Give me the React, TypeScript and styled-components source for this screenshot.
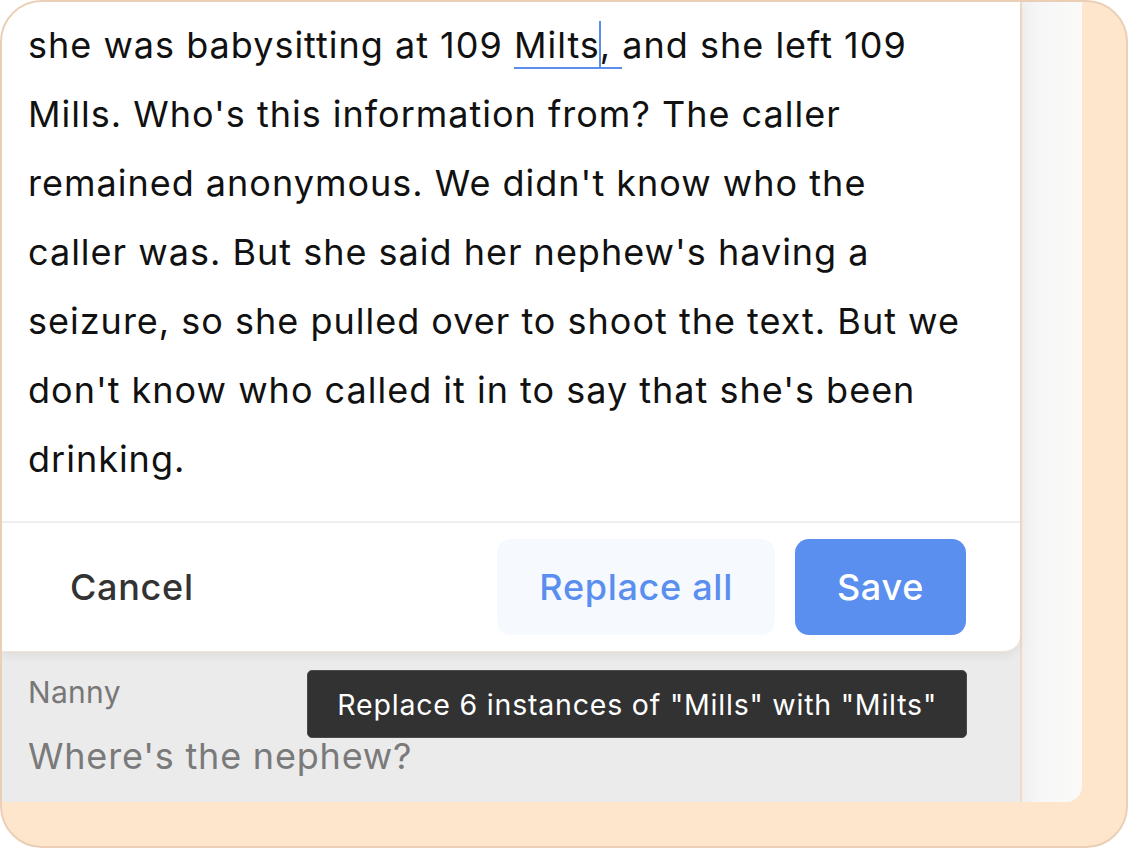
import React from 'react';
import styled, { createGlobalStyle } from 'styled-components';

const GlobalStyle = createGlobalStyle`
  html, body {
    margin: 0;
    padding: 0;
    background: #ffffff;
  }
  body {
    font-family: Inter, "Noto Sans", "Liberation Sans", sans-serif;
    -webkit-font-smoothing: antialiased;
  }
`;

// Peach device frame around the screen
const Frame = styled.div`
  box-sizing: border-box;
  width: 1128px;
  height: 848px;
  display: flex;
  padding: 0 44px 44px 0;
  background: #fee6cc;
  border: 2px solid #eacfb6;
  border-radius: 42px;
  overflow: hidden;
`;

const Screen = styled.div`
  flex: 1;
  display: flex;
  border-radius: 0 0 16px 0;
  overflow: hidden;
`;

const Main = styled.div`
  position: relative;
  box-sizing: border-box;
  width: 1020px;
  display: flex;
  flex-direction: column;
  background: #ebebeb;
  border-right: 2px solid #f0dcc6;
`;

const Sidebar = styled.div`
  flex: 1;
  background: linear-gradient(90deg, #efefef 0%, #f7f7f7 30%, #fbfaf9 100%);
`;

const EditorCard = styled.section`
  background: #ffffff;
  border-radius: 0 0 16px 0;
  border-bottom: 1px solid #f3e2d0;
  box-shadow: 0 4px 10px rgba(0, 0, 0, 0.06);
  z-index: 1;
`;

const Body = styled.p`
  margin: 0;
  padding: 9px 26px 27px;
  font-size: 36px;
  letter-spacing: 1px;
  line-height: 69px;
  color: #111111;
  white-space: nowrap;
`;

const Edited = styled.span`
  border-bottom: 2px solid #5b8def;
`;

const Caret = styled.span`
  display: inline-block;
  width: 2px;
  height: 47px;
  margin: 0 -1px;
  vertical-align: -10px;
  background: #5b8def;
`;

const Divider = styled.hr`
  margin: 0;
  border: 0;
  height: 2px;
  background: #efefef;
`;

const Footer = styled.div`
  display: flex;
  align-items: center;
  gap: 20px;
  padding: 16px 54px 16px 26px;
`;

const Spacer = styled.div`
  flex: 1;
`;

const Button = styled.button<{ $variant: 'ghost' | 'soft' | 'primary' }>`
  height: 96px;
  padding: 0 42px;
  border: 0;
  border-radius: 14px;
  font-family: Inter, "Noto Sans", "Liberation Sans", sans-serif;
  font-size: 36px;
  letter-spacing: 0.7px;
  font-weight: 500;
  cursor: pointer;
  background: ${({ $variant }) =>
    $variant === 'primary' ? '#5a8ff0' : $variant === 'soft' ? '#f6f9fe' : 'transparent'};
  color: ${({ $variant }) =>
    $variant === 'primary' ? '#ffffff' : $variant === 'soft' ? '#5a8ff0' : '#333333'};
`;

const Transcript = styled.div`
  padding: 20px 26px 0;
`;

const Speaker = styled.div`
  font-size: 30px;
  letter-spacing: 0.3px;
  line-height: 40px;
  color: #777777;
`;

const Line = styled.div`
  margin-top: 22px;
  font-size: 36px;
  letter-spacing: 0.8px;
  line-height: 44px;
  color: #7a7a7a;
`;

const Tooltip = styled.div`
  position: absolute;
  top: 668px;
  right: 53px;
  z-index: 2;
  box-sizing: border-box;
  height: 68px;
  display: flex;
  align-items: center;
  padding: 0 29px;
  background: #323232;
  border: 1px solid #4a4a4a;
  border-radius: 5px;
  font-size: 28.5px;
  letter-spacing: 0.8px;
  color: #ffffff;
  white-space: nowrap;
`;

export default function App() {
  return (
    <>
      <GlobalStyle />
      <Frame>
        <Screen>
          <Main>
            <EditorCard aria-label="Edit transcript">
              <Body>
                she was babysitting at 109{' '}
                <Edited>
                  Milts<Caret />,{' '}
                </Edited>
                and she left 109
                <br />
                Mills. Who's this information from? The caller
                <br />
                remained anonymous. We didn't know who the
                <br />
                caller was. But she said her nephew's having a
                <br />
                seizure, so she pulled over to shoot the text. But we
                <br />
                don't know who called it in to say that she's been
                <br />
                drinking.
              </Body>
              <Divider />
              <Footer>
                <Button $variant="ghost">Cancel</Button>
                <Spacer />
                <Button $variant="soft">Replace all</Button>
                <Button $variant="primary">Save</Button>
              </Footer>
            </EditorCard>
            <Transcript>
              <Speaker>Nanny</Speaker>
              <Line>Where's the nephew?</Line>
            </Transcript>
            <Tooltip role="tooltip">Replace 6 instances of "Mills" with "Milts"</Tooltip>
          </Main>
          <Sidebar />
        </Screen>
      </Frame>
    </>
  );
}
